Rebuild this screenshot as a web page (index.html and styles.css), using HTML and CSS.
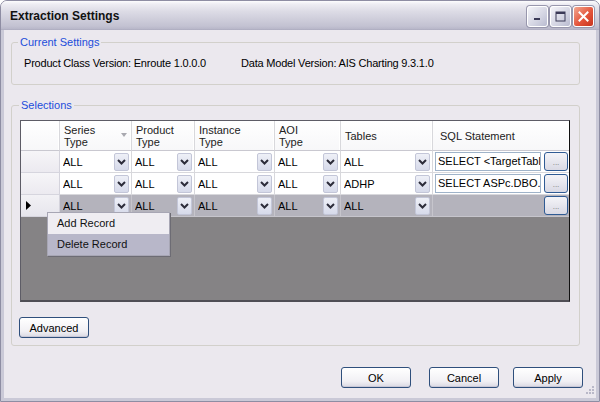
FILE: index.html
```html
<!DOCTYPE html>
<html>
<head>
<meta charset="utf-8">
<link rel="stylesheet" href="styles.css">
</head>
<body>
<div class="window">
  <div class="titlebar">
    <span class="title">Extraction Settings</span>
    <div class="tb-buttons">
      <span class="tb-btn"><svg width="9" height="9" viewBox="0 0 9 9"><rect x="1" y="6" width="6" height="2" fill="#3b3a57"/></svg></span>
      <span class="tb-btn"><svg width="11" height="11" viewBox="0 0 11 11"><rect x="1" y="1" width="9" height="9" fill="none" stroke="#3b3a57" stroke-width="1"/><rect x="1" y="1" width="9" height="2" fill="#3b3a57"/></svg></span>
      <span class="tb-btn close"><svg width="11" height="11" viewBox="0 0 11 11"><path d="M1.5 1.5l8 8M9.5 1.5l-8 8" stroke="#fff" stroke-width="2" stroke-linecap="square"/></svg></span>
    </div>
  </div>
  <div class="body">
    <fieldset class="group current">
      <legend>Current Settings</legend>
      <div class="info"><span class="info-a">Product Class Version: Enroute 1.0.0.0</span><span>Data Model Version: AIS Charting 9.3.1.0</span></div>
    </fieldset>
    <fieldset class="group selections">
      <legend>Selections</legend>
      <div class="grid-wrap">
        <div class="grid">
          <div class="hcell"></div>
          <div class="hcell">Series<br>Type<span class="sort"></span></div>
          <div class="hcell">Product<br>Type</div>
          <div class="hcell">Instance<br>Type</div>
          <div class="hcell">AOI<br>Type</div>
          <div class="hcell single">Tables</div>
          <div class="hcell single sqlh">SQL Statement</div>

          <div class="rh"></div>
          <div class="cell"><span class="val">ALL</span><span class="dd"><svg width="9" height="6" viewBox="0 0 9 6"><path d="M1 1l3.5 3.5L8 1" stroke="#2c2c3a" stroke-width="2" fill="none"/></svg></span></div>
          <div class="cell"><span class="val">ALL</span><span class="dd"><svg width="9" height="6" viewBox="0 0 9 6"><path d="M1 1l3.5 3.5L8 1" stroke="#2c2c3a" stroke-width="2" fill="none"/></svg></span></div>
          <div class="cell"><span class="val">ALL</span><span class="dd"><svg width="9" height="6" viewBox="0 0 9 6"><path d="M1 1l3.5 3.5L8 1" stroke="#2c2c3a" stroke-width="2" fill="none"/></svg></span></div>
          <div class="cell"><span class="val">ALL</span><span class="dd"><svg width="9" height="6" viewBox="0 0 9 6"><path d="M1 1l3.5 3.5L8 1" stroke="#2c2c3a" stroke-width="2" fill="none"/></svg></span></div>
          <div class="cell"><span class="val">ALL</span><span class="dd"><svg width="9" height="6" viewBox="0 0 9 6"><path d="M1 1l3.5 3.5L8 1" stroke="#2c2c3a" stroke-width="2" fill="none"/></svg></span></div>
          <div class="cell sql"><span class="tbox">SELECT &lt;TargetTabl</span><span class="ell">...</span></div>

          <div class="rh"></div>
          <div class="cell"><span class="val">ALL</span><span class="dd"><svg width="9" height="6" viewBox="0 0 9 6"><path d="M1 1l3.5 3.5L8 1" stroke="#2c2c3a" stroke-width="2" fill="none"/></svg></span></div>
          <div class="cell"><span class="val">ALL</span><span class="dd"><svg width="9" height="6" viewBox="0 0 9 6"><path d="M1 1l3.5 3.5L8 1" stroke="#2c2c3a" stroke-width="2" fill="none"/></svg></span></div>
          <div class="cell"><span class="val">ALL</span><span class="dd"><svg width="9" height="6" viewBox="0 0 9 6"><path d="M1 1l3.5 3.5L8 1" stroke="#2c2c3a" stroke-width="2" fill="none"/></svg></span></div>
          <div class="cell"><span class="val">ALL</span><span class="dd"><svg width="9" height="6" viewBox="0 0 9 6"><path d="M1 1l3.5 3.5L8 1" stroke="#2c2c3a" stroke-width="2" fill="none"/></svg></span></div>
          <div class="cell"><span class="val">ADHP</span><span class="dd"><svg width="9" height="6" viewBox="0 0 9 6"><path d="M1 1l3.5 3.5L8 1" stroke="#2c2c3a" stroke-width="2" fill="none"/></svg></span></div>
          <div class="cell sql"><span class="tbox">SELECT ASPc.DBO.</span><span class="ell">...</span></div>

          <div class="rh cur"><svg width="5" height="9" viewBox="0 0 5 9"><path d="M0 0L5 4.5L0 9Z" fill="#000"/></svg></div>
          <div class="cell sel"><span class="val">ALL</span><span class="dd"><svg width="9" height="6" viewBox="0 0 9 6"><path d="M1 1l3.5 3.5L8 1" stroke="#2c2c3a" stroke-width="2" fill="none"/></svg></span></div>
          <div class="cell sel"><span class="val">ALL</span><span class="dd"><svg width="9" height="6" viewBox="0 0 9 6"><path d="M1 1l3.5 3.5L8 1" stroke="#2c2c3a" stroke-width="2" fill="none"/></svg></span></div>
          <div class="cell sel"><span class="val">ALL</span><span class="dd"><svg width="9" height="6" viewBox="0 0 9 6"><path d="M1 1l3.5 3.5L8 1" stroke="#2c2c3a" stroke-width="2" fill="none"/></svg></span></div>
          <div class="cell sel"><span class="val">ALL</span><span class="dd"><svg width="9" height="6" viewBox="0 0 9 6"><path d="M1 1l3.5 3.5L8 1" stroke="#2c2c3a" stroke-width="2" fill="none"/></svg></span></div>
          <div class="cell sel"><span class="val">ALL</span><span class="dd"><svg width="9" height="6" viewBox="0 0 9 6"><path d="M1 1l3.5 3.5L8 1" stroke="#2c2c3a" stroke-width="2" fill="none"/></svg></span></div>
          <div class="cell sel sql"><span class="tbox empty"></span><span class="ell">...</span></div>
        </div>
        <div class="menu">
          <div class="mi">Add Record</div>
          <div class="mi hl">Delete Record</div>
        </div>
      </div>
      <button class="btn adv">Advanced</button>
    </fieldset>
    <div class="footer">
      <button class="btn">OK</button>
      <button class="btn cancel">Cancel</button>
      <button class="btn">Apply</button>
    </div>
    <svg class="grip" width="12" height="12" viewBox="0 0 12 12">
      <g fill="#b9b8c8">
        <rect x="9" y="1" width="2" height="2"/>
        <rect x="6" y="4" width="2" height="2"/><rect x="9" y="4" width="2" height="2"/>
        <rect x="3" y="7" width="2" height="2"/><rect x="6" y="7" width="2" height="2"/><rect x="9" y="7" width="2" height="2"/>
      </g>
    </svg>
  </div>
</div>
</body>
</html>
```
FILE: styles.css
```css
* { box-sizing: border-box; }
html, body { margin: 0; padding: 0; }
body {
  width: 600px; height: 402px; overflow: hidden;
  font-family: "Liberation Sans", Arial, sans-serif;
  font-size: 11px; color: #000; background: #fff;
}
.window {
  width: 600px; height: 402px;
  display: flex; flex-direction: column;
  position: relative;
  background: #ebe8ee;
  border: 1px solid #8e8da3;
  border-radius: 7px 7px 0 0;
  overflow: hidden;
}
.titlebar {
  height: 29px; flex: none;
  display: flex; align-items: center;
  padding: 0 5px 0 9px;
  background: linear-gradient(#fdfdfe 0, #eeedf3 3px, #dddce6 10px, #cfcedb 18px, #c3c2d2 25px, #b8b7c9 28px, #a9a8bc 29px);
}
.title { flex: 1; font-weight: bold; font-size: 12px; color: #111; padding-top: 1px; }
.tb-buttons { display: flex; gap: 2px; padding-top: 1px; }
.tb-btn {
  width: 21px; height: 21px;
  border-radius: 3px;
  border: 1px solid #fff;
  box-shadow: 0 0 0 1px #9897ad;
  background: linear-gradient(135deg, #f4f4f9, #d3d4e2 60%, #b9bbd0);
  display: flex; align-items: center; justify-content: center;
}
.tb-btn.close {
  background: linear-gradient(135deg, #f2a891, #e4553c 55%, #c8341f);
}
.body {
  flex: 1;
  position: relative;
  display: flex; flex-direction: column;
  padding: 6px 16px 0 7px;
  border-left: 3px solid #cac9d7;
  border-right: 3px solid #cac9d7;
  border-bottom: 3px solid #cac9d7;
}
.group {
  margin: 0;
  border: 1px solid #d2d0cb;
  border-radius: 3px;
  min-width: 0;
}
.group legend {
  color: #1c4ddb;
  padding: 0 2px;
  line-height: 13px;
}
.current {
  height: 49px;
  padding: 8px 12px 0 12px;
}
.current legend { margin-left: -6px; }
.info { display: flex; line-height: 13px; letter-spacing: -0.2px; }
.info-a { width: 217px; flex: none; }
.selections {
  margin-top: 14px;
  height: 247px;
  padding: 8px 9px 6px 7px;
}
.selections legend { margin-left: 0; }
.grid-wrap {
  position: relative;
  margin-left: 1px;
  width: 550px; height: 182px;
  border: 1px solid #5d5c66;
  border-right-color: #111;
  border-bottom: 2px solid #4f4e55;
  background: #858385;
}
.grid {
  display: grid;
  grid-template-columns: 39px 72px 63px 80px 66px 92px 136px;
  grid-template-rows: 30px 22px 22px 22px;
}
.hcell {
  position: relative;
  background: linear-gradient(#ffffff, #f7f7f9);
  border-right: 1px solid #d8d8dc;
  border-bottom: 1px solid #c9c8d0;
  box-shadow: inset -2px 0 0 -1px #fff;
  padding: 3px 0 0 4px;
  line-height: 12px;
  color: #222;
}
.hcell.single { display: flex; align-items: center; padding-top: 0; }
.hcell.sqlh { padding-left: 7px; border-right: none; }
.sort {
  position: absolute; left: 61px; top: 12px;
  width: 0; height: 0;
  border-left: 3px solid transparent;
  border-right: 3px solid transparent;
  border-top: 4px solid #a9a9b0;
}
.rh {
  background: linear-gradient(#f6f5f8, #eceaf0);
  border-bottom: 1px solid #d6d5de;
  border-right: 1px solid #d4d3dc;
}
.rh.cur {
  display: flex; align-items: center; padding-left: 5px;
  background: linear-gradient(#f2f1f5, #e6e5ec);
}
.cell {
  display: flex; align-items: center;
  background: #fff;
  border-right: 1px solid #d8d8dc;
  border-bottom: 1px solid #d8d8dc;
  padding: 0 2px 0 3px;
}
.cell.sel { background: #b4b3bc; border-color: #c6c5cc; }
.val { flex: 1; white-space: nowrap; overflow: hidden; }
.dd {
  width: 15px; height: 18px; flex: none;
  border: 1px solid #c3c6d8;
  border-radius: 2px;
  background: linear-gradient(#eef0f7, #d6daea);
  display: flex; align-items: center; justify-content: center;
}
.cell.sql { padding: 0 1px 0 2px; border-right: none; }
.tbox {
  width: 106px; height: 19px; flex: none;
  border: 1px solid #9fb3c9;
  background: #fff;
  padding: 0 0 0 2px;
  line-height: 17px;
  white-space: nowrap; overflow: hidden;
}
.tbox.empty { background: transparent; border-color: transparent; }
.ell {
  margin-left: 3px;
  width: 24px; height: 19px; flex: none;
  border: 1px solid #2f5b94;
  border-radius: 3px;
  background: linear-gradient(#f4f4f8, #d9d9e4);
  color: #777;
  font-size: 8px;
  display: flex; align-items: flex-end; justify-content: center;
  padding-bottom: 3px;
  line-height: 8px;
}
.menu {
  position: absolute;
  left: 26px; top: 91px;
  width: 123px;
  background: #efedf2;
  border: 1px solid #a7a6b4;
  box-shadow: 1px 1px 0 #6d6c74;
}
.mi { height: 21px; line-height: 21px; padding-left: 9px; color: #111; }
.mi.hl { background: #b8b7c9; }
.btn {
  font-family: "Liberation Sans", Arial, sans-serif;
  font-size: 11px; color: #000;
  width: 70px; height: 21px;
  border: 1px solid #2f4f7c;
  border-radius: 3px;
  background: linear-gradient(#ffffff, #f1f0f4 70%, #d9d8e2);
  box-shadow: inset 0 -1px 0 #c9c8d6;
  padding: 0;
}
.adv { margin-top: 15px; margin-left: 0; display: block; }
.footer {
  display: flex; justify-content: flex-end;
  gap: 18px;
  margin-top: 21px;
  margin-right: -3px;
}
.footer .cancel { margin-right: -4px; }
.grip { position: absolute; right: 1px; bottom: 1px; }
```
